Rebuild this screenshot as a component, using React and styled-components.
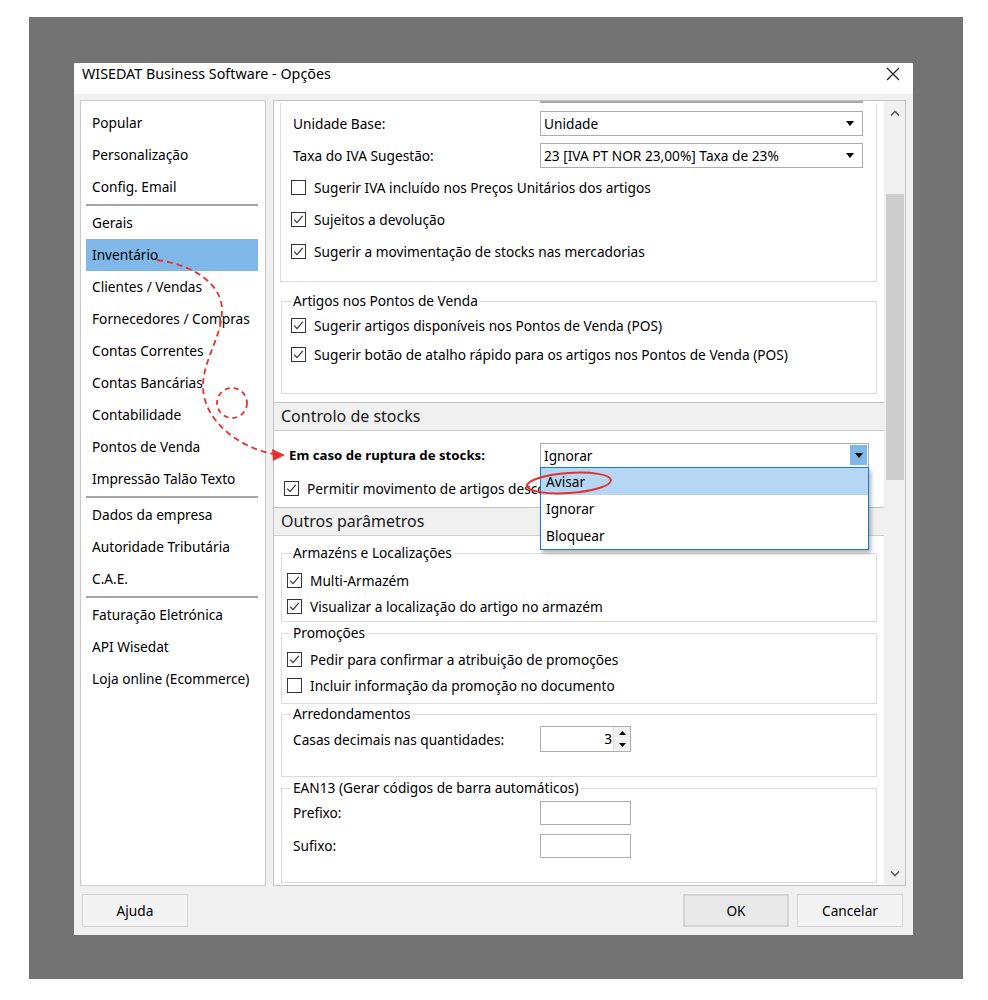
import React from "react";
import styled, { createGlobalStyle } from "styled-components";

const GlobalStyle = createGlobalStyle`
  html, body {
    margin: 0;
    padding: 0;
    background: #ffffff;
  }
  body {
    font-family: "Noto Sans", "Open Sans", sans-serif;
    font-size: 13.7px;
    color: #000;
  }
  * {
    box-sizing: border-box;
  }
`;

const navGroups = [
  ["Popular", "Personalização", "Config. Email"],
  [
    "Gerais",
    "Inventário",
    "Clientes / Vendas",
    "Fornecedores / Compras",
    "Contas Correntes",
    "Contas Bancárias",
    "Contabilidade",
    "Pontos de Venda",
    "Impressão Talão Texto",
  ],
  ["Dados da empresa", "Autoridade Tributária", "C.A.E."],
  ["Faturação Eletrónica", "API Wisedat", "Loja online (Ecommerce)"],
];

const CheckIcon = ({ checked }) => (
  <CheckBox>
    {checked && (
      <svg width="13" height="13" viewBox="0 0 13 13">
        <polyline
          points="2.2,6.6 5,9.6 10.8,2.8"
          fill="none"
          stroke="#3a3a3a"
          strokeWidth="1.3"
        />
      </svg>
    )}
  </CheckBox>
);

const Caret = () => (
  <svg width="8" height="5" viewBox="0 0 8 5">
    <polygon points="0,0 8,0 4,5" fill="#000" />
  </svg>
);

const Check = ({ checked, indent, height, children }) => (
  <CheckRow $indent={indent} $height={height}>
    <CheckIcon checked={checked} />
    <span>{children}</span>
  </CheckRow>
);

const App = () => {
  return (
    <Page>
      <GlobalStyle />
      <Frame>
        <Dialog>
          <TitleBar>
            <Title>WISEDAT Business Software - Opções</Title>
            <CloseBtn>
              <svg width="14" height="14" viewBox="0 0 14 14">
                <path d="M1 1 L13 13 M13 1 L1 13" stroke="#1a1a1a" strokeWidth="1.2" />
              </svg>
            </CloseBtn>
          </TitleBar>

          <Body>
            <Nav>
              {navGroups.map((group, gi) => (
                <React.Fragment key={gi}>
                  {gi > 0 && <NavSep />}
                  {group.map((item) => (
                    <NavItem key={item} $active={item === "Inventário"}>
                      {item}
                    </NavItem>
                  ))}
                </React.Fragment>
              ))}
            </Nav>

            <Panel>
              <Scroller>
                <CutField />
                <TopGroup>
                  <FieldRow $indent={12} $labelWidth={247} $height={32}>
                    <span>Unidade Base:</span>
                    <Select $width={323}>
                      <span>Unidade</span>
                      <Caret />
                    </Select>
                  </FieldRow>
                  <FieldRow $indent={12} $labelWidth={247} $height={32}>
                    <span>Taxa do IVA Sugestão:</span>
                    <Select $width={323}>
                      <span>23 [IVA PT NOR 23,00%] Taxa de 23%</span>
                      <Caret />
                    </Select>
                  </FieldRow>
                  <Check indent={10} height={32}>
                    Sugerir IVA incluído nos Preços Unitários dos artigos
                  </Check>
                  <Check checked indent={10} height={32}>
                    Sujeitos a devolução
                  </Check>
                  <Check checked indent={10} height={32}>
                    Sugerir a movimentação de stocks nas mercadorias
                  </Check>
                </TopGroup>

                <Group $mt={11} $pt={2} $pb={24}>
                  <Legend>Artigos nos Pontos de Venda</Legend>
                  <Check checked indent={9} height={29}>
                    Sugerir artigos disponíveis nos Pontos de Venda (POS)
                  </Check>
                  <Check checked indent={9} height={29}>
                    Sugerir botão de atalho rápido para os artigos nos Pontos de Venda (POS)
                  </Check>
                </Group>

                <SectionBand $mt={8}>Controlo de stocks</SectionBand>

                <StockRow>
                  <BoldLabel>Em caso de ruptura de stocks:</BoldLabel>
                  <ComboWrap>
                    <Select $width={329} $active>
                      <span>Ignorar</span>
                      <ComboButton>
                        <Caret />
                      </ComboButton>
                    </Select>
                    <DropList>
                      <DropItem $hover>Avisar</DropItem>
                      <DropItem>Ignorar</DropItem>
                      <DropItem>Bloquear</DropItem>
                    </DropList>
                  </ComboWrap>
                </StockRow>
                <PermitRow>
                  <Check checked indent={10} height={24}>
                    Permitir movimento de artigos descontinuados
                  </Check>
                </PermitRow>

                <SectionBand $mt={7}>Outros parâmetros</SectionBand>

                <Group $mt={9} $pt={6} $pb={2}>
                  <Legend>Armazéns e Localizações</Legend>
                  <Check checked indent={5} height={26}>
                    Multi-Armazém
                  </Check>
                  <Check checked indent={5} height={26}>
                    Visualizar a localização do artigo no armazém
                  </Check>
                </Group>

                <Group $mt={3} $pt={5} $pb={5}>
                  <Legend>Promoções</Legend>
                  <Check checked indent={5} height={26}>
                    Pedir para confirmar a atribuição de promoções
                  </Check>
                  <Check indent={5} height={26}>
                    Incluir informação da promoção no documento
                  </Check>
                </Group>

                <Group $mt={2} $pt={4} $pb={24}>
                  <Legend>Arredondamentos</Legend>
                  <FieldRow $indent={11} $labelWidth={247} $height={26}>
                    <span>Casas decimais nas quantidades:</span>
                    <SpinBox>
                      <SpinValue>3</SpinValue>
                      <SpinButtons>
                        <SpinBtn>
                          <svg width="7" height="4" viewBox="0 0 7 4">
                            <polygon points="0,4 7,4 3.5,0" fill="#000" />
                          </svg>
                        </SpinBtn>
                        <SpinBtn>
                          <svg width="7" height="4" viewBox="0 0 7 4">
                            <polygon points="0,0 7,0 3.5,4" fill="#000" />
                          </svg>
                        </SpinBtn>
                      </SpinButtons>
                    </SpinBox>
                  </FieldRow>
                </Group>

                <Group $mt={3} $pt={0} $pb={20}>
                  <Legend>EAN13 (Gerar códigos de barra automáticos)</Legend>
                  <FieldRow $indent={11} $labelWidth={247} $height={33}>
                    <span>Prefixo:</span>
                    <TextInput />
                  </FieldRow>
                  <FieldRow $indent={11} $labelWidth={247} $height={33}>
                    <span>Sufixo:</span>
                    <TextInput />
                  </FieldRow>
                </Group>
              </Scroller>

              <ScrollBar>
                <ScrollArrow>
                  <svg width="10" height="6" viewBox="0 0 10 6">
                    <polyline points="1,5.5 5,1.5 9,5.5" fill="none" stroke="#606060" strokeWidth="1.6" />
                  </svg>
                </ScrollArrow>
                <Track>
                  <Thumb />
                </Track>
                <ScrollArrow>
                  <svg width="10" height="6" viewBox="0 0 10 6">
                    <polyline points="1,0.5 5,4.5 9,0.5" fill="none" stroke="#606060" strokeWidth="1.6" />
                  </svg>
                </ScrollArrow>
              </ScrollBar>
            </Panel>
          </Body>

          <Footer>
            <Button>Ajuda</Button>
            <Spacer />
            <Button $default>OK</Button>
            <Button>Cancelar</Button>
          </Footer>
        </Dialog>
      </Frame>

      <Annotations width="988" height="1000" viewBox="0 0 988 1000">
        <path
          d="M157 260 C 195 265, 222 285, 222 310 C 222 337, 203 360, 203 386 C 203 420, 238 447, 273 454"
          fill="none"
          stroke="#e8302e"
          strokeWidth="1.8"
          strokeDasharray="6 4"
        />
        <polygon points="285,455 272,449 273,461" fill="#e8302e" />
        <circle
          cx="232"
          cy="403"
          r="15"
          fill="none"
          stroke="#e8302e"
          strokeWidth="1.8"
          strokeDasharray="5 4"
        />
        <ellipse
          cx="569"
          cy="483"
          rx="42"
          ry="10"
          transform="rotate(-4 569 483)"
          fill="none"
          stroke="#e8302e"
          strokeWidth="2"
        />
      </Annotations>
    </Page>
  );
};

export default App;

const Page = styled.div`
  position: relative;
  width: 988px;
  height: 1000px;
  padding: 17px 0 0 29px;
`;

const Frame = styled.div`
  width: 934px;
  height: 962px;
  background: #737373;
  padding: 46px 0 0 45px;
`;

const Dialog = styled.div`
  width: 839px;
  height: 872px;
  background: #f0f0f0;
  display: flex;
  flex-direction: column;
`;

const TitleBar = styled.div`
  height: 31px;
  background: #ffffff;
  display: flex;
  justify-content: space-between;
  align-items: flex-start;
  padding: 0 13px 0 8px;
`;

const Title = styled.div`
  font-size: 14.3px;
  line-height: 22px;
  color: #000;
`;

const CloseBtn = styled.div`
  display: flex;
  align-items: center;
  height: 22px;
`;

const Body = styled.div`
  display: flex;
  gap: 7px;
  padding: 6px 7px 0 6px;
  height: 792px;
`;

const Nav = styled.div`
  width: 186px;
  height: 786px;
  background: #ffffff;
  border: 1px solid #c9c9c9;
  padding: 6px 7px 0 5px;
`;

const NavItem = styled.div`
  height: 32px;
  line-height: 32px;
  padding-left: 6px;
  white-space: nowrap;
  background: ${(p) => (p.$active ? "#80b9e9" : "transparent")};
`;

const NavSep = styled.div`
  height: 2px;
  background: #a6a6a6;
  margin: 1px 0 1px;
`;

const Panel = styled.div`
  width: 633px;
  height: 786px;
  display: flex;
  border: 1px solid #c3c3c3;
  background: #ffffff;
`;

const Scroller = styled.div`
  flex: 1;
  overflow: hidden;
  display: flex;
  flex-direction: column;
`;

const CutField = styled.div`
  margin-left: 266px;
  width: 323px;
  height: 2px;
  background: #a9a9a9;
  flex-shrink: 0;
`;

const TopGroup = styled.div`
  margin-left: 6px;
  width: 597px;
  border: 1px solid #dcdcdc;
  border-top: none;
  padding: 4px 0 14px;
  flex-shrink: 0;
`;

const Group = styled.fieldset`
  margin: ${(p) => p.$mt}px 0 0 7px;
  width: 596px;
  min-width: 0;
  border: 1px solid #dcdcdc;
  padding: ${(p) => p.$pt}px 0 ${(p) => p.$pb}px 0;
  flex-shrink: 0;
`;

const Legend = styled.legend`
  margin-left: 9px;
  padding: 0 2px;
  line-height: 16px;
  font-size: 13.7px;
`;

const FieldRow = styled.div`
  display: flex;
  align-items: center;
  height: ${(p) => p.$height}px;
  padding-left: ${(p) => p.$indent}px;

  & > span:first-child {
    width: ${(p) => p.$labelWidth}px;
    white-space: nowrap;
  }
`;

const Select = styled.div`
  width: ${(p) => p.$width}px;
  height: 25px;
  border: 1px solid #adadad;
  background: #ffffff;
  display: flex;
  align-items: center;
  justify-content: space-between;
  padding: 0 ${(p) => (p.$active ? "1px" : "8px")} 0 3px;
  white-space: nowrap;
`;

const ComboWrap = styled.div`
  position: relative;
`;

const ComboButton = styled.div`
  width: 17px;
  height: 20px;
  background: #80b9e9;
  display: flex;
  align-items: center;
  justify-content: center;
`;

const DropList = styled.div`
  position: absolute;
  top: 24px;
  left: 0;
  width: 329px;
  background: #ffffff;
  border: 1px solid #1a7bd4;
  box-shadow: 2px 3px 4px rgba(0, 0, 0, 0.3);
  z-index: 5;
`;

const DropItem = styled.div`
  height: 27px;
  line-height: 27px;
  padding-left: 5px;
  background: ${(p) => (p.$hover ? "#b5d7f3" : "#ffffff")};
`;

const CheckRow = styled.div`
  display: flex;
  align-items: center;
  gap: 8px;
  height: ${(p) => p.$height}px;
  padding-left: ${(p) => p.$indent}px;
  white-space: nowrap;
`;

const CheckBox = styled.div`
  width: 15px;
  height: 15px;
  border: 1px solid #333333;
  background: #ffffff;
  display: flex;
  align-items: center;
  justify-content: center;
  flex-shrink: 0;
`;

const SectionBand = styled.div`
  margin-top: ${(p) => p.$mt}px;
  height: 29px;
  line-height: 27px;
  background: #f0f0f0;
  border-top: 1px solid #c4c4c4;
  border-bottom: 1px solid #d0d0d0;
  padding-left: 7px;
  font-size: 16px;
  color: #1a1a1a;
  flex-shrink: 0;
`;

const StockRow = styled.div`
  display: flex;
  align-items: center;
  margin-top: 12px;
  height: 24px;
  padding-left: 15px;
  flex-shrink: 0;
`;

const BoldLabel = styled.span`
  width: 251px;
  font-weight: 700;
  font-size: 13.2px;
  white-space: nowrap;
`;

const PermitRow = styled.div`
  margin-top: 9px;
  flex-shrink: 0;
`;

const SpinBox = styled.div`
  width: 91px;
  height: 26px;
  border: 1px solid #adadad;
  display: flex;
  background: #ffffff;
`;

const SpinValue = styled.div`
  flex: 1;
  text-align: right;
  line-height: 24px;
  padding-right: 1px;
`;

const SpinButtons = styled.div`
  width: 17px;
  display: flex;
  flex-direction: column;
  border-left: 1px solid #e3e3e3;
`;

const SpinBtn = styled.div`
  flex: 1;
  background: #f0f0f0;
  display: flex;
  align-items: center;
  justify-content: center;
  border-bottom: 1px solid #ffffff;
`;

const TextInput = styled.div`
  width: 91px;
  height: 24px;
  border: 1px solid #adadad;
  background: #ffffff;
`;

const ScrollBar = styled.div`
  width: 21px;
  background: #f0f0f0;
  display: flex;
  flex-direction: column;
`;

const ScrollArrow = styled.div`
  height: 23px;
  display: flex;
  align-items: center;
  justify-content: center;
`;

const Track = styled.div`
  flex: 1;
  padding: 70px 1px 0 2px;
`;

const Thumb = styled.div`
  height: 286px;
  background: #cdcdcd;
`;

const Footer = styled.div`
  display: flex;
  gap: 8px;
  padding: 8px 10px 0 8px;
`;

const Spacer = styled.div`
  flex: 1;
`;

const Button = styled.div`
  width: 106px;
  height: 33px;
  display: flex;
  align-items: center;
  justify-content: center;
  background: ${(p) => (p.$default ? "#e9e9e9" : "#f3f3f3")};
  border: ${(p) => (p.$default ? "2px solid #d5d5d5" : "1px solid #d6d6d6")};
  color: #000;
`;

const Annotations = styled.svg`
  position: absolute;
  top: 0;
  left: 0;
  pointer-events: none;
  z-index: 10;
`;
